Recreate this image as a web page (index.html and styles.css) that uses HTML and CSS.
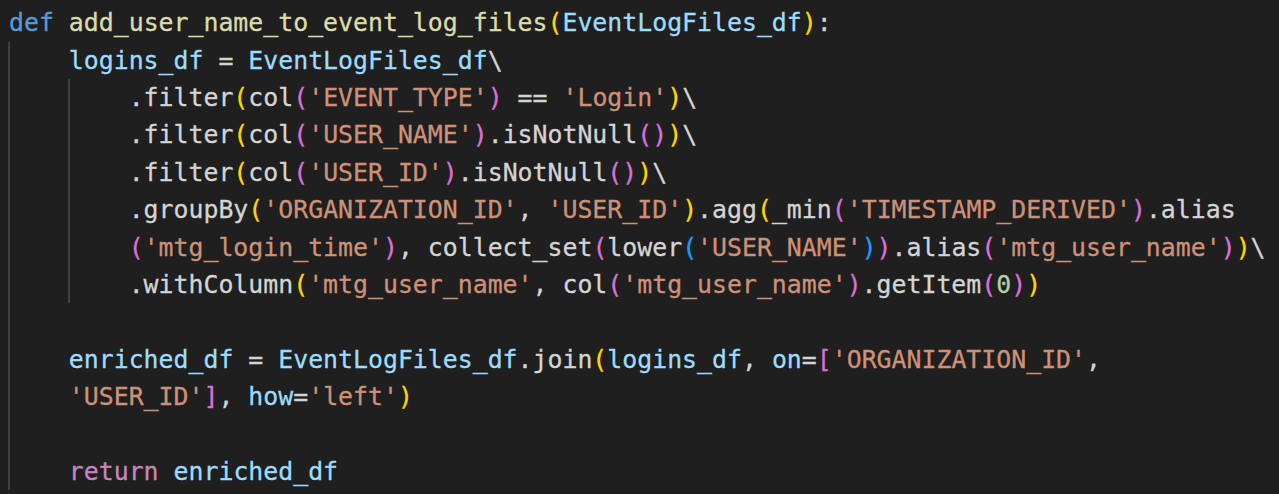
FILE: index.html
```html
<!DOCTYPE html>
<html>
<head>
<meta charset="utf-8">
<link rel="stylesheet" href="styles.css">
</head>
<body>
<div class="code">
<div class="ln"><span class="k">def</span> <span class="fn">add_user_name_to_event_log_files</span><span class="b1">(</span><span class="v">EventLogFiles_df</span><span class="b1">)</span>:</div>
<div class="block">
<div class="ln"><span class="v">logins_df</span> = <span class="v">EventLogFiles_df</span>\</div>
<div class="block">
<div class="ln">.filter<span class="b1">(</span>col<span class="b2">(</span><span class="s">'EVENT_TYPE'</span><span class="b2">)</span> == <span class="s">'Login'</span><span class="b1">)</span>\</div>
<div class="ln">.filter<span class="b1">(</span>col<span class="b2">(</span><span class="s">'USER_NAME'</span><span class="b2">)</span>.isNotNull<span class="b2">()</span><span class="b1">)</span>\</div>
<div class="ln">.filter<span class="b1">(</span>col<span class="b2">(</span><span class="s">'USER_ID'</span><span class="b2">)</span>.isNotNull<span class="b2">()</span><span class="b1">)</span>\</div>
<div class="ln">.groupBy<span class="b1">(</span><span class="s">'ORGANIZATION_ID'</span>, <span class="s">'USER_ID'</span><span class="b1">)</span>.agg<span class="b1">(</span>_min<span class="b2">(</span><span class="s">'TIMESTAMP_DERIVED'</span><span class="b2">)</span>.alias</div>
<div class="ln"><span class="b2">(</span><span class="s">'mtg_login_time'</span><span class="b2">)</span>, collect_set<span class="b2">(</span>lower<span class="b3">(</span><span class="s">'USER_NAME'</span><span class="b3">)</span><span class="b2">)</span>.alias<span class="b2">(</span><span class="s">'mtg_user_name'</span><span class="b2">)</span><span class="b1">)</span>\</div>
<div class="ln">.withColumn<span class="b1">(</span><span class="s">'mtg_user_name'</span>, col<span class="b2">(</span><span class="s">'mtg_user_name'</span><span class="b2">)</span>.getItem<span class="b2">(</span><span class="n">0</span><span class="b2">)</span><span class="b1">)</span></div>
</div>
<div class="ln"></div>
<div class="ln"><span class="v">enriched_df</span> = <span class="v">EventLogFiles_df</span>.join<span class="b1">(</span><span class="v">logins_df</span>, <span class="v">on</span>=<span class="b2">[</span><span class="s">'ORGANIZATION_ID'</span>,</div>
<div class="ln"><span class="s">'USER_ID'</span><span class="b2">]</span>, <span class="v">how</span>=<span class="s">'left'</span><span class="b1">)</span></div>
<div class="ln"></div>
<div class="ln"><span class="kr">return</span> <span class="v">enriched_df</span></div>
</div>
</div>
</body>
</html>
```

FILE: styles.css
```css
html, body {
  margin: 0;
  padding: 0;
  background: #1f1f1f;
}

body {
  width: 1279px;
  height: 494px;
  overflow: hidden;
}

.code {
  padding: 4.4px 0 0 9px;
  font-family: "DejaVu Sans Mono", "Liberation Mono", monospace;
  font-size: 24.85px;
  line-height: 37.36px;
  color: #d4d4d4;
  -webkit-text-stroke: 0.3px currentColor;
}

.ln {
  height: 37.36px;
  white-space: pre;
}

.block {
  margin-left: -1px;
  border-left: 2px solid #404040;
  padding-left: calc(4ch - 1px);
}

.k { color: #569cd6; }
.kr { color: #c586c0; }
.fn { color: #dcdcaa; }
.v { color: #9cdcfe; }
.s { color: #ce9178; }
.n { color: #b5cea8; }
.b1 { color: #ffd700; }
.b2 { color: #da70d6; }
.b3 { color: #179fff; }
```
